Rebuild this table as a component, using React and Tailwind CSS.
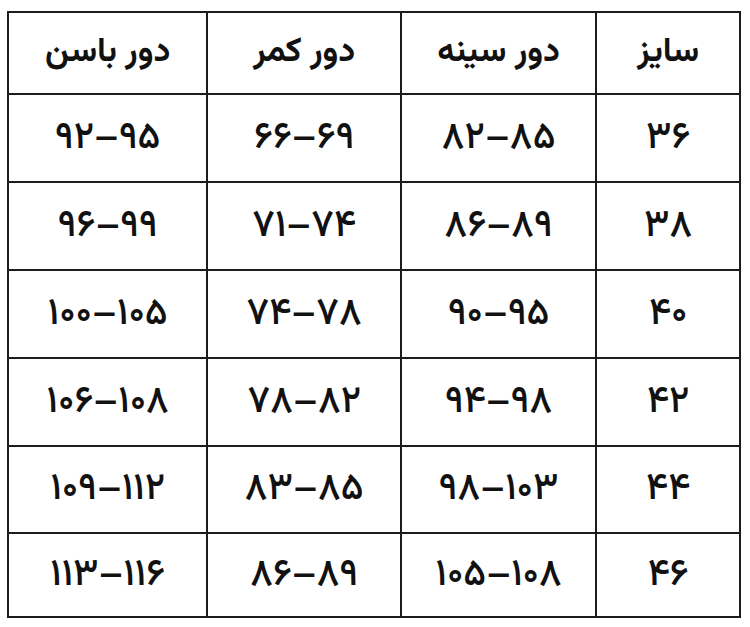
const headers = ['سایز', 'دور سینه', 'دور کمر', 'دور باسن'];

const rows = [
  ['۳۶', '۸۲–۸۵', '۶۶–۶۹', '۹۲–۹۵'],
  ['۳۸', '۸۶–۸۹', '۷۱–۷۴', '۹۶–۹۹'],
  ['۴۰', '۹۰–۹۵', '۷۴–۷۸', '۱۰۰–۱۰۵'],
  ['۴۲', '۹۴–۹۸', '۷۸–۸۲', '۱۰۶–۱۰۸'],
  ['۴۴', '۹۸–۱۰۳', '۸۳–۸۵', '۱۰۹–۱۱۲'],
  ['۴۶', '۱۰۵–۱۰۸', '۸۶–۸۹', '۱۱۳–۱۱۶'],
];

const rowHeights = ['h-[88px]', 'h-[88px]', 'h-[88px]', 'h-[88px]', 'h-[87px]', 'h-[84px]'];
const colWidths = ['w-[144px]', 'w-[196px]', 'w-[194px]', 'w-[200px]'];

export default function App() {
  return (
    <div className="w-[750px] h-[627px] bg-white pt-[11px] pl-[7px] font-['Vazirmatn','DejaVu_Sans',sans-serif] text-[#111]">
      <table dir="rtl" className="w-[734px] border-collapse border-[2.5px] border-[#1c1c1c]">
        <thead>
          <tr className="h-[82px]">
            {headers.map((h, i) => (
              <th key={i} className={`${colWidths[i]} border-[2.5px] border-[#1c1c1c] text-center align-middle text-[34px] font-bold pb-[2px]`}>
                {h}
              </th>
            ))}
          </tr>
        </thead>
        <tbody>
          {rows.map((r, ri) => (
            <tr key={ri} className={rowHeights[ri]}>
              {r.map((c, ci) => (
                <td key={ci} className="border-[2.5px] border-[#1c1c1c] text-center align-middle text-[38px] font-medium">
                  <span dir="ltr">{c}</span>
                </td>
              ))}
            </tr>
          ))}
        </tbody>
      </table>
    </div>
  );
}
